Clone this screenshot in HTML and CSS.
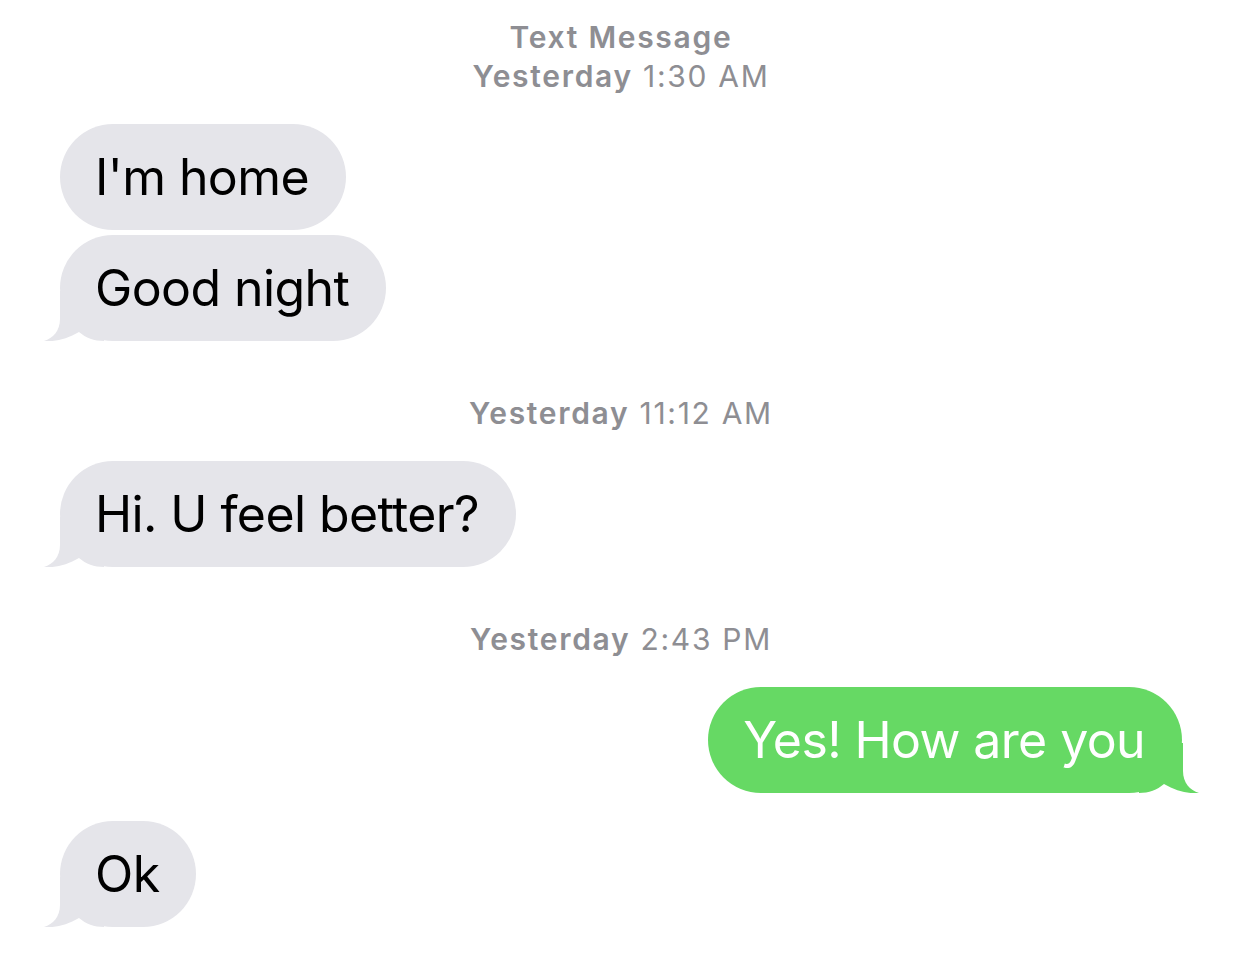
FILE: index.html
```html
<!DOCTYPE html>
<html lang="en">
<head>
  <meta charset="UTF-8" />
  <title>Messages</title>
  <link rel="stylesheet" href="styles.css">
</head>
<body>
  <main class="thread">
    <div class="stamp">
      <div><b>Text Message</b></div>
      <div><b>Yesterday</b> 1:30 AM</div>
    </div>

    <div class="bubble in"><span class="text">I'm home</span></div>
    <div class="bubble in tail">
      <svg class="tail-shape" viewBox="0 0 60 50"><path d="M16 0 L16 28 C16 40 9 47 0 50 C11 51 23 48 35 41 C42 47 50 50 60 50 L60 0 Z"/></svg>
      <span class="text">Good night</span>
    </div>

    <div class="stamp gap">
      <div><b>Yesterday</b> 11:12 AM</div>
    </div>

    <div class="bubble in tail">
      <svg class="tail-shape" viewBox="0 0 60 50"><path d="M16 0 L16 28 C16 40 9 47 0 50 C11 51 23 48 35 41 C42 47 50 50 60 50 L60 0 Z"/></svg>
      <span class="text">Hi. U feel better?</span>
    </div>

    <div class="stamp gap">
      <div><b>Yesterday</b> 2:43 PM</div>
    </div>

    <div class="bubble out tail">
      <svg class="tail-shape" viewBox="0 0 60 50"><path d="M16 0 L16 28 C16 40 9 47 0 50 C11 51 23 48 35 41 C42 47 50 50 60 50 L60 0 Z"/></svg>
      <span class="text">Yes! How are you</span>
    </div>

    <div class="bubble in tail switch">
      <svg class="tail-shape" viewBox="0 0 60 50"><path d="M16 0 L16 28 C16 40 9 47 0 50 C11 51 23 48 35 41 C42 47 50 50 60 50 L60 0 Z"/></svg>
      <span class="text">Ok</span>
    </div>
  </main>
</body>
</html>
```

FILE: styles.css
```css
html, body {
  margin: 0;
  background: #fff;
}

body {
  font-family: Inter, "Noto Sans", sans-serif;
}

.thread {
  display: flex;
  flex-direction: column;
  padding: 18px 59px 20px 60px;
}

/* grey centered timestamps */
.stamp {
  text-align: center;
  color: #8e8e93;
  font-size: 30px;
  letter-spacing: 1.7px;
  line-height: 39px;
  margin-bottom: 28px;
}

.stamp b {
  font-weight: 600;
}

.stamp.gap {
  margin-top: 53px;
}

.bubble {
  position: relative;
  align-self: flex-start;
  height: 106px;
  line-height: 106px;
  padding: 0 37px 0 35px;
  border-radius: 53px;
  font-size: 50px;
  letter-spacing: -0.6px;
  white-space: nowrap;
}

.bubble .text {
  position: relative;
}

.bubble + .bubble {
  margin-top: 5px;
}

.bubble.switch {
  margin-top: 28px;
}

.bubble.in {
  background: #e5e5ea;
  color: #000;
}

.bubble.out {
  align-self: flex-end;
  background: #66d964;
  color: #fff;
}

.tail-shape {
  position: absolute;
  bottom: 0;
  left: -16px;
  width: 60px;
  height: 50px;
}

.in .tail-shape { fill: #e5e5ea; }

.out .tail-shape {
  left: auto;
  right: -17px;
  fill: #66d964;
  transform: scaleX(-1);
}
```
